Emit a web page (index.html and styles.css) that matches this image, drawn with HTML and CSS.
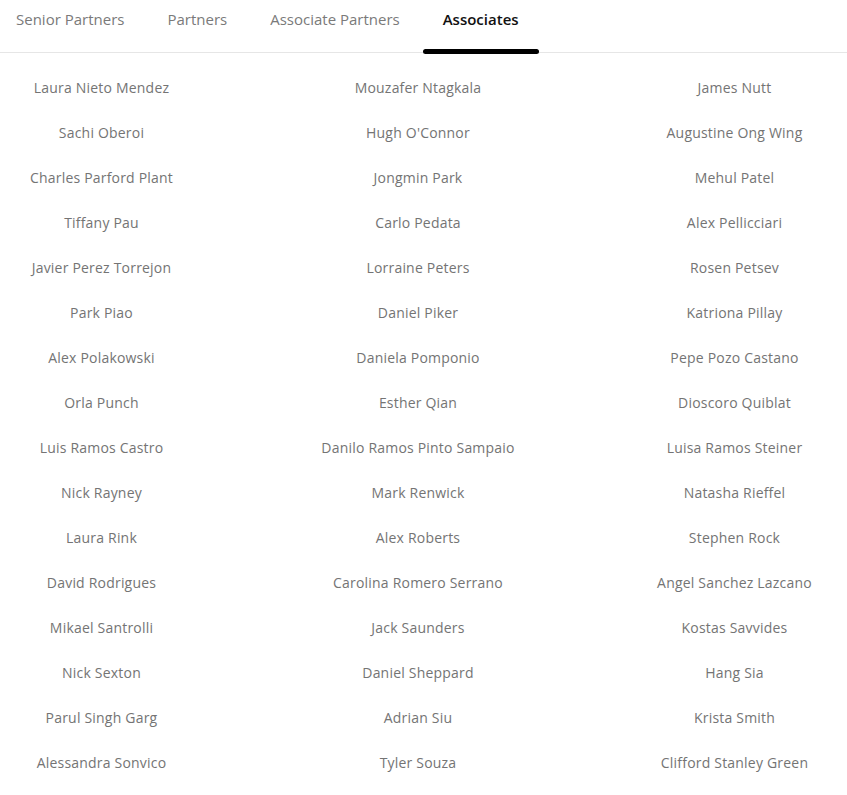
FILE: index.html
```html
<!DOCTYPE html>
<html>
<head>
<meta charset="utf-8">
<link rel="stylesheet" href="styles.css">
</head>
<body>
<nav class="tabs">
  <a class="tab">Senior Partners</a>
  <a class="tab">Partners</a>
  <a class="tab">Associate Partners</a>
  <a class="tab active">Associates</a>
</nav>
<div class="names">
  <div class="col">
    <span>Laura Nieto Mendez</span>
    <span>Sachi Oberoi</span>
    <span>Charles Parford Plant</span>
    <span>Tiffany Pau</span>
    <span>Javier Perez Torrejon</span>
    <span>Park Piao</span>
    <span>Alex Polakowski</span>
    <span>Orla Punch</span>
    <span>Luis Ramos Castro</span>
    <span>Nick Rayney</span>
    <span>Laura Rink</span>
    <span>David Rodrigues</span>
    <span>Mikael Santrolli</span>
    <span>Nick Sexton</span>
    <span>Parul Singh Garg</span>
    <span>Alessandra Sonvico</span>
  </div>
  <div class="col">
    <span>Mouzafer Ntagkala</span>
    <span>Hugh O'Connor</span>
    <span>Jongmin Park</span>
    <span>Carlo Pedata</span>
    <span>Lorraine Peters</span>
    <span>Daniel Piker</span>
    <span>Daniela Pomponio</span>
    <span>Esther Qian</span>
    <span>Danilo Ramos Pinto Sampaio</span>
    <span>Mark Renwick</span>
    <span>Alex Roberts</span>
    <span>Carolina Romero Serrano</span>
    <span>Jack Saunders</span>
    <span>Daniel Sheppard</span>
    <span>Adrian Siu</span>
    <span>Tyler Souza</span>
  </div>
  <div class="col">
    <span>James Nutt</span>
    <span>Augustine Ong Wing</span>
    <span>Mehul Patel</span>
    <span>Alex Pellicciari</span>
    <span>Rosen Petsev</span>
    <span>Katriona Pillay</span>
    <span>Pepe Pozo Castano</span>
    <span>Dioscoro Quiblat</span>
    <span>Luisa Ramos Steiner</span>
    <span>Natasha Rieffel</span>
    <span>Stephen Rock</span>
    <span>Angel Sanchez Lazcano</span>
    <span>Kostas Savvides</span>
    <span>Hang Sia</span>
    <span>Krista Smith</span>
    <span>Clifford Stanley Green</span>
  </div>
</div>
</body>
</html>
```

FILE: styles.css
```css
html, body {
  margin: 0;
  padding: 0;
  background: #fff;
}
body {
  font-family: "Open Sans", "Liberation Sans", sans-serif;
  font-size: 14px;
  color: #666;
}
.tabs {
  display: flex;
  gap: 43px;
  padding-left: 16px;
  height: 52px;
  border-bottom: 1px solid #e6e6e6;
}
.tab {
  position: relative;
  padding-top: 9px;
  line-height: 20px;
  font-size: 15px;
  color: #7a7a7a;
}
.tab.active {
  color: #111;
  font-weight: 600;
}
.tab.active::after {
  content: "";
  position: absolute;
  left: -20px;
  right: -20px;
  bottom: -2px;
  height: 5px;
  border-radius: 3px;
  background: #000;
}
.names {
  display: flex;
  justify-content: space-between;
  width: 836px;
  padding-top: 12px;
}
.col {
  width: 203px;
  display: flex;
  flex-direction: column;
  align-items: center;
}
.col span {
  height: 45px;
  line-height: 45px;
  white-space: nowrap;
  color: #747474;
  letter-spacing: 0.2px;
}
```
